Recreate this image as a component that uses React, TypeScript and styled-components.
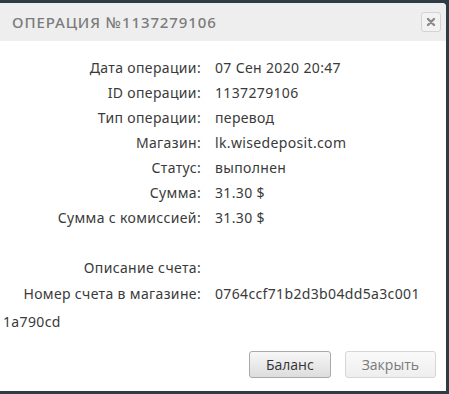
import styled, { createGlobalStyle } from "styled-components";

const GlobalStyle = createGlobalStyle`
  html, body {
    margin: 0;
    padding: 0;
    background: #2e3d45;
  }
  body {
    font-family: "Noto Sans", "Open Sans", sans-serif;
  }
`;

type Detail = { label: string; value?: string; tall?: boolean };

const details: Detail[] = [
  { label: "Дата операции:", value: "07 Сен 2020 20:47" },
  { label: "ID операции:", value: "1137279106" },
  { label: "Тип операции:", value: "перевод" },
  { label: "Магазин:", value: "lk.wisedeposit.com" },
  { label: "Статус:", value: "выполнен" },
  { label: "Сумма:", value: "31.30 $" },
  { label: "Сумма с комиссией:", value: "31.30 $" },
  { label: "" },
  { label: "Описание счета:" },
  {
    label: "Номер счета в магазине:",
    value: "0764ccf71b2d3b04dd5a3c0011a790cd",
    tall: true,
  },
];

export default function App() {
  return (
    <>
      <GlobalStyle />
      <Dialog>
        <Header>
          <Title>Операция №1137279106</Title>
          <CloseButton aria-label="close">
            <svg width="10" height="10" viewBox="0 0 10 10">
              <path
                d="M2 2 L8 8 M8 2 L2 8"
                stroke="#8a8a8a"
                strokeWidth="2.4"
                strokeLinecap="round"
              />
            </svg>
          </CloseButton>
        </Header>
        <Body>
          {details.map((d, i) => (
            <Row key={i} $tall={d.tall}>
              <Label>{d.label}</Label>
              {d.value && <Value>{d.value}</Value>}
            </Row>
          ))}
        </Body>
        <Footer>
          <Button>Баланс</Button>
          <Button $disabled>Закрыть</Button>
        </Footer>
      </Dialog>
    </>
  );
}

const Dialog = styled.div`
  margin-top: 3px;
  width: 446px;
  height: 388px;
  background: #ffffff;
  border-top-right-radius: 4px;
  display: flex;
  flex-direction: column;
  overflow: hidden;
`;

const Header = styled.div`
  height: 38px;
  background: #eeeeee;
  display: flex;
  align-items: center;
  justify-content: space-between;
  padding: 0 5px 0 12px;
  box-sizing: border-box;
`;

const Title = styled.h2`
  margin: 0;
  font-family: "Noto Sans", sans-serif;
  font-size: 15px;
  font-weight: 500;
  letter-spacing: 0.9px;
  text-transform: uppercase;
  color: #7b7b7b;
`;

const CloseButton = styled.button`
  width: 20px;
  height: 20px;
  padding: 0;
  display: flex;
  align-items: center;
  justify-content: center;
  background: #f2f2f2;
  border: 1px solid #d3d3d3;
  border-radius: 3px;
`;

const Body = styled.div`
  padding: 14px 22px 0 3px;
  color: #3a3a3a;
  font-size: 14px;
  letter-spacing: 0.35px;
`;

const Row = styled.div<{ $tall?: boolean }>`
  min-height: 25px;
  line-height: ${(p) => (p.$tall ? "28px" : "25px")};
  word-break: break-all;
`;

const Label = styled.span`
  display: inline-block;
  width: 198px;
  text-align: right;
  word-break: normal;
`;

const Value = styled.span`
  padding-left: 14px;
`;

const Footer = styled.div`
  margin-top: auto;
  display: flex;
  justify-content: flex-end;
  gap: 14px;
  padding: 0 10px 13px 0;
`;

const Button = styled.button<{ $disabled?: boolean }>`
  height: 27px;
  padding: 0 16px;
  font-family: "Open Sans", "Noto Sans", sans-serif;
  font-size: 14px;
  color: ${(p) => (p.$disabled ? "#7a7a7a" : "#333333")};
  border: 1px solid ${(p) => (p.$disabled ? "#d6d6d6" : "#a9a9a9")};
  border-radius: 3px;
  background: ${(p) =>
    p.$disabled
      ? "linear-gradient(#fafafa, #eeeeee)"
      : "linear-gradient(#f7f7f7, #dddddd)"};
`;
